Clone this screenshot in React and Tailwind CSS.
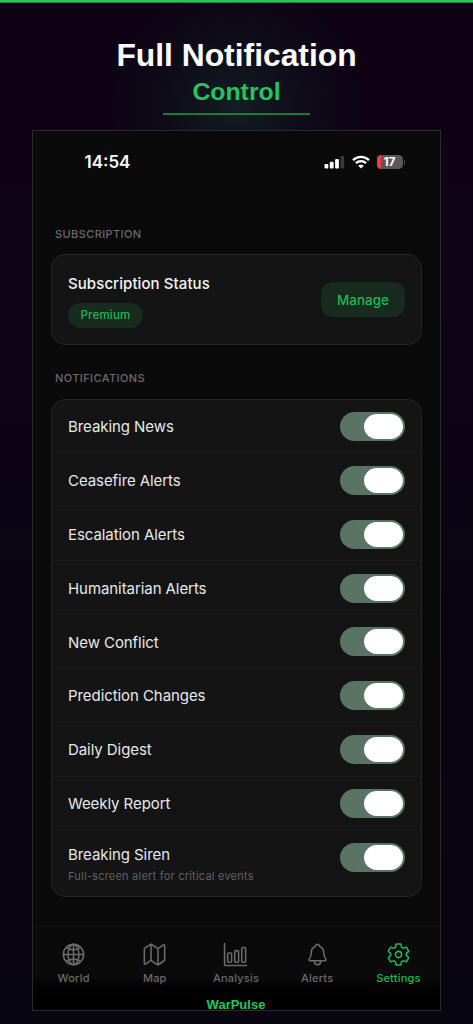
import { useState } from 'react';
import clsx from 'clsx';
import {
  IoGlobeOutline,
  IoMapOutline,
  IoBarChartOutline,
  IoNotificationsOutline,
  IoSettingsOutline,
} from 'react-icons/io5';

const OPTIONS = [
  { id: 'breaking', label: 'Breaking News' },
  { id: 'ceasefire', label: 'Ceasefire Alerts' },
  { id: 'escalation', label: 'Escalation Alerts' },
  { id: 'humanitarian', label: 'Humanitarian Alerts' },
  { id: 'conflict', label: 'New Conflict' },
  { id: 'prediction', label: 'Prediction Changes' },
  { id: 'daily', label: 'Daily Digest' },
  { id: 'weekly', label: 'Weekly Report' },
  { id: 'siren', label: 'Breaking Siren', hint: 'Full-screen alert for critical events' },
];

const TABS = [
  { label: 'World', Icon: IoGlobeOutline },
  { label: 'Map', Icon: IoMapOutline },
  { label: 'Analysis', Icon: IoBarChartOutline },
  { label: 'Alerts', Icon: IoNotificationsOutline },
  { label: 'Settings', Icon: IoSettingsOutline, active: true },
];

function StatusBar() {
  return (
    <div className="flex h-[62px] items-center justify-between pl-[51.5px] pr-[35px]">
      <span className="pt-px text-[17px] font-semibold leading-none text-white">14:54</span>
      <div className="flex items-center">
        <svg width="21" height="14" viewBox="0 0 21 14" fill="#fff">
          <rect x="0.5" y="9" width="3.8" height="4.5" rx="1" />
          <rect x="5.8" y="6.7" width="3.8" height="6.8" rx="1" />
          <rect x="11.1" y="4" width="3.8" height="9.5" rx="1" />
          <rect x="16.4" y="1" width="3.8" height="12.5" rx="1" fill="#3a3a3a" />
        </svg>
        <svg className="ml-[7px]" width="18" height="14" viewBox="0 0 18 14" fill="none" stroke="#fff" strokeWidth="2.3">
          <path d="M1 5.1C5.5.8 12.5.8 17 5.1" />
          <path d="M3.9 8.2c2.9-2.8 7.3-2.8 10.2 0" />
          <path d="M9 13.6 6.2 10.8c1.6-1.5 4-1.5 5.6 0z" fill="#fff" stroke="none" />
        </svg>
        <div className="relative ml-[7px] flex h-[14px] w-[26px] items-center justify-center overflow-hidden rounded-[4.5px] bg-[#58585a]">
          <span className="absolute inset-y-0 left-0 w-[4.5px] bg-[#fb3b41]" />
          <span className="relative text-[12px] font-bold leading-none text-white">17</span>
        </div>
        <span className="ml-px h-[5px] w-[1.5px] rounded-r bg-[#4a4a4c]" />
      </div>
    </div>
  );
}

function Toggle({ on, onClick }) {
  return (
    <button
      type="button"
      role="switch"
      aria-checked={on}
      onClick={onClick}
      className={clsx(
        'flex h-[29px] w-[65px] shrink-0 items-center rounded-full px-[2px]',
        on ? 'justify-end bg-[#597365]' : 'justify-start bg-[#39393d]'
      )}
    >
      <span className="h-[25px] w-[39px] rounded-full bg-white" />
    </button>
  );
}

function SectionTitle({ children }) {
  return <h2 className="pl-1 text-[11px] font-medium leading-4 text-[#6b6b6b] tracking-[0.4px]">{children}</h2>;
}

export default function App() {
  const [enabled, setEnabled] = useState(() => Object.fromEntries(OPTIONS.map(o => [o.id, true])));

  const toggle = (id) => setEnabled(prev => ({ ...prev, [id]: !prev[id] }));

  return (
    <div className="h-[1024px] w-[473px] overflow-hidden bg-[radial-gradient(circle_at_236px_108px,#111e21_0px,rgba(15,19,28,0.9)_45px,rgba(14,12,23,0.6)_90px,transparent_125px),linear-gradient(to_bottom,#0e0315_0%,#0d0415_35%,#080610_100%)] font-['Inter',sans-serif]">
      <div className="h-[3px] border-b border-[#18823f] bg-[#22c55e]" />
      <header className="flex h-[127px] flex-col items-center pt-[33px] font-['Liberation_Sans',sans-serif] font-bold">
        <h1 className="text-[31.8px] leading-[38px] text-white">Full Notification</h1>
        <p className="text-[24.8px] leading-[36px] text-[#22c55e]">Control</p>
        <div className="mt-[3px] h-[2px] w-[147px] bg-[#187b3e]" />
      </header>

      <main className="mx-auto flex h-[881px] w-[409px] flex-col overflow-hidden border border-[#2a2a2c] bg-[#0a0a0a]">
        <StatusBar />

        <div className="px-[18px] pt-[33px]">
          <SectionTitle>SUBSCRIPTION</SectionTitle>
          <div className="mt-3 flex h-[91px] items-center justify-between rounded-[14px] border border-[#262626] bg-[#141414] px-4">
            <div className="flex flex-col items-start pt-[2px]">
              <p className="text-[15px] font-medium leading-5 tracking-[0.08px] text-[#f5f5f5]">Subscription Status</p>
              <span className="mt-[9px] flex h-[25px] w-[75px] items-center justify-center rounded-full bg-[#182b1f] pt-[2px] text-[11.5px] font-medium leading-none tracking-[0.2px] text-[#22b557]">Premium</span>
            </div>
            <button type="button" className="h-[35px] w-[84px] rounded-[12px] bg-[#182b1f] pt-px text-[13.5px] font-medium text-[#22b557]">Manage</button>
          </div>

          <div className="mt-[25px]">
            <SectionTitle>NOTIFICATIONS</SectionTitle>
          </div>
          <ul className="mt-[12.5px] rounded-[14px] border border-[#262626] bg-[#141414]">
            {OPTIONS.map(({ id, label, hint }) => (
              <li key={id} className="flex h-[53.87px] items-center justify-between border-b border-[#191919] px-4 last:h-[66px] last:border-0">
                {hint ? (
                  <div className="pt-[2px]">
                    <p className="text-[15px] leading-5 tracking-[-0.07px] text-[#e8e8e8]">{label}</p>
                    <p className="mt-[3px] text-[11px] leading-4 tracking-[0.22px] text-[#606060]">{hint}</p>
                  </div>
                ) : (
                  <p className="pt-[2.5px] text-[15px] leading-5 tracking-[-0.07px] text-[#e8e8e8]">{label}</p>
                )}
                <div className={clsx(hint ? 'mb-[12px]' : 'pt-px')}>
                  <Toggle on={enabled[id]} onClick={() => toggle(id)} />
                </div>
              </li>
            ))}
          </ul>
        </div>

        <div className="mt-auto flex h-[84px] flex-col border-t border-[#131313] bg-gradient-to-b from-[#0a0a0a] from-60% to-black">
          <nav className="grid grid-cols-5 pr-px pt-[15px]">
            {TABS.map(({ label, Icon, active }) => (
              <a key={label} className={clsx('flex flex-col items-center', active ? 'text-[#22b557]' : 'text-[#6b6b6b]')}>
                <Icon className="size-[25px]" />
                <span className="mt-[3px] text-[11px] font-medium leading-4 tracking-[0.2px]">{label}</span>
              </a>
            ))}
          </nav>
          <p className="mt-[14px] pr-px text-center font-['Liberation_Sans',sans-serif] text-[13px] font-bold leading-[10px] text-[#22c55e]">WarPulse</p>
        </div>
      </main>
    </div>
  );
}
